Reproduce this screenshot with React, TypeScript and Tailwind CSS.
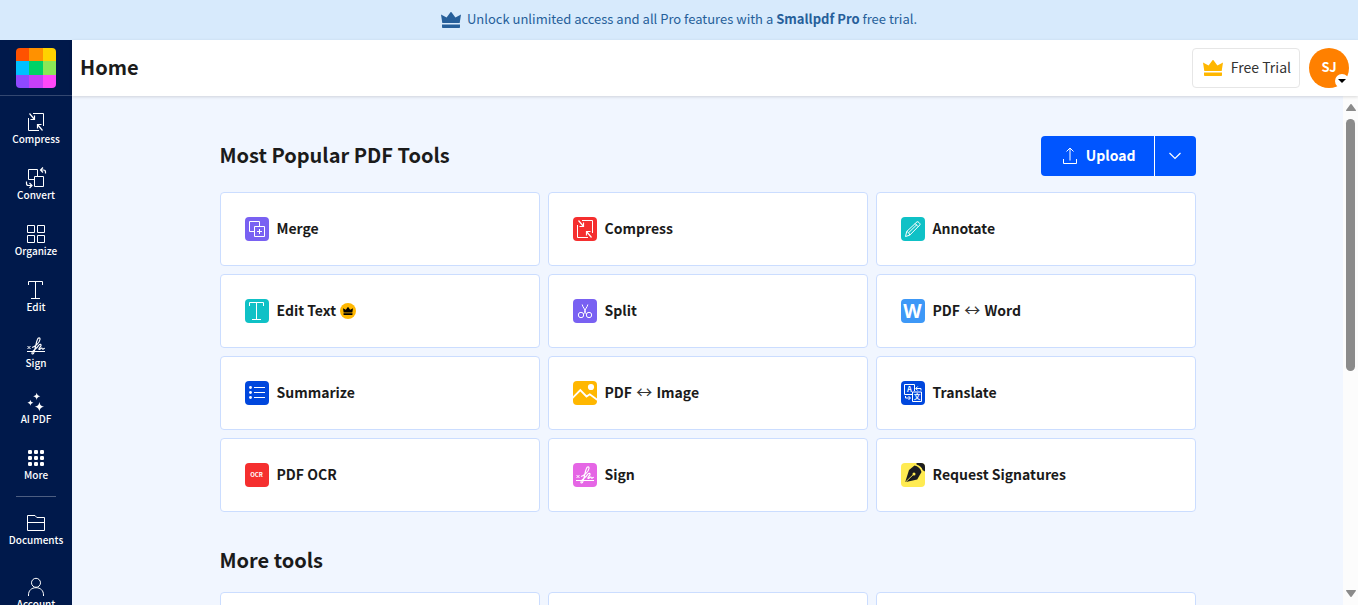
import type { ReactNode } from "react";

type IconProps = { className?: string };

function Line({ children, className = "size-6" }: { children: ReactNode; className?: string }) {
  return (
    <svg viewBox="0 0 24 24" fill="none" stroke="currentColor" strokeWidth="1" className={className} aria-hidden="true">
      {children}
    </svg>
  );
}

function Crown({ className }: IconProps) {
  return (
    <svg viewBox="0 0 20 16" fill="currentColor" className={className} aria-hidden="true">
      <path d="M0 2.4 5.6 5.6 9.3.4a.9.9 0 0 1 1.4 0l3.7 5.2L20 2.4 18.7 11H1.3z" />
      <path d="M1 12.6h18v2.6a.8.8 0 0 1-.8.8H1.8a.8.8 0 0 1-.8-.8z" />
    </svg>
  );
}

const compressPaths = (
  <>
    <path d="M9 3.500h10.500V16M15 20.500H4.500V8" />
    <path d="m5.500 3.500 5 6M10.500 5.500v4H6.500M18.500 20.500l-5-6M13.500 18.500v-4h4" strokeWidth="1.200" />
  </>
);

const signPaths = (
  <>
    <path d="M3 17.500h18" />
    <path d="m3.500 12 3 3m0-3-3 3" />
    <path
      strokeWidth="1.150"
      d="M8 13.500c2.500-.5 7.500-4.500 8-8 .2-2.500-1.800-2-2.600 0C12 8.500 11.500 15 9.700 19c-.7 1.600-2.200 1.200-1.700-.3.500-1.700 3.500-3.700 5-5.200.8-.8 1.500-2.500 2.600-3 1.500-.6 2 .8.800 2.200-1 1.200-1.900 1.700-1.500 2.500.5.900 1.700-.8 2.700-1.200.8-.3.300 1.200 1.200 1.200.7 0 .9-.7 2-1"
    />
  </>
);

const editPaths = <path d="M4.500 7V3.500h14V7M11.500 3.500v17M7 20.500h9" />;

const navTools: { label: string; icon: ReactNode }[] = [
  { label: "Compress", icon: <Line>{compressPaths}</Line> },
  {
    label: "Convert",
    icon: (
      <Line>
        <path d="M10.500 13.500h-6v-10h9v7" />
        <path d="M10.500 10.500h9v10h-9z" />
        <path d="M21.500 7.500V6c0-1.300-.7-2-2-2h-3M19 1.500 16.500 4 19 6.500M2.500 15.500V17.500c0 1.300.7 2 2 2h3.500M5.500 17 8 19.500 5.500 22" strokeWidth="1.200" />
      </Line>
    ),
  },
  {
    label: "Organize",
    icon: (
      <Line>
        <path d="M3.500 3.500h7v7h-7zM13.500 3.500h7v7h-7zM3.500 13.500h7v7h-7zM13.500 13.500h7v7h-7z" />
      </Line>
    ),
  },
  { label: "Edit", icon: <Line>{editPaths}</Line> },
  { label: "Sign", icon: <Line>{signPaths}</Line> },
  {
    label: "AI PDF",
    icon: (
      <svg viewBox="0 0 24 24" fill="currentColor" className="size-6" aria-hidden="true">
        <path d="M12.700 2.700c.6 2.400 1.200 3 3.600 3.600-2.400.6-3 1.200-3.600 3.600-.6-2.400-1.200-3-3.600-3.600 2.400-.6 3-1.200 3.600-3.600z" />
        <path d="M6.400 9.700c.5 2.100.9 2.500 3 3-2.100.5-2.500.9-3 3-.5-2.100-.9-2.500-3-3 2.100-.5 2.500-.9 3-3z" />
        <path d="M15.400 12c.8 3.300 1.400 3.900 4.700 4.700-3.300.8-3.900 1.400-4.700 4.700-.8-3.300-1.400-3.900-4.700-4.700 3.300-.8 3.900-1.400 4.700-4.700z" />
      </svg>
    ),
  },
  {
    label: "More",
    icon: (
      <svg viewBox="0 0 24 24" fill="currentColor" className="size-6" aria-hidden="true">
        {[4, 10, 16].map((y) => [4, 10, 16].map((x) => <rect key={`${x}-${y}`} x={x} y={y} width="4" height="4" rx="1.300" />))}
      </svg>
    ),
  },
];

const navAccount: { label: string; icon: ReactNode }[] = [
  {
    label: "Documents",
    icon: (
      <Line>
        <path d="M3.500 4.500h7.500l1.800 2h7.700v13h-17zM3.500 11.500h17" />
      </Line>
    ),
  },
  {
    label: "Account",
    icon: (
      <Line>
        <circle cx="12" cy="7.800" r="4.500" />
        <path d="M4.500 21v-1c0-4.500 3-7.300 7.500-7.300s7.500 2.800 7.500 7.300v1" />
      </Line>
    ),
  },
];

function NavItem({ label, icon }: { label: string; icon: ReactNode }) {
  return (
    <a href="#" className="flex h-14 shrink-0 flex-col items-center justify-center text-white">
      {icon}
      <span className="pb-0.5 text-[10px] leading-[10px] font-medium">{label}</span>
    </a>
  );
}

function Tile({ color, children }: { color: string; children: ReactNode }) {
  return (
    <span className={`flex size-6 shrink-0 items-center justify-center rounded ${color} text-white`} aria-hidden="true">
      {children}
    </span>
  );
}

const arrow = <span className="px-px text-base leading-4 font-normal text-[#333]">↔</span>;

const tools: { name: ReactNode; icon: ReactNode; pro?: boolean }[] = [
  {
    name: "Merge",
    icon: (
      <Tile color="bg-[#7961f2]">
        <Line>
          <path d="M9.500 14.500h-5v-10h10v5M9.500 9.500h10v10h-10zM14.500 12v5M12 14.500h5" />
        </Line>
      </Tile>
    ),
  },
  { name: "Compress", icon: <Tile color="bg-[#f52f2f]"><Line>{compressPaths}</Line></Tile> },
  {
    name: "Annotate",
    icon: (
      <Tile color="bg-[#0fc1c6]">
        <Line>
          <path d="m4.500 19.500 1.200-5L16 4.800c.8-.8 3.800 2 3 3L8.700 18.200zM5.700 14.500c1.500.3 2.700 1.800 3 3.700M14 6.500l3.200 3.200M7.500 15.800 16 7.500" />
        </Line>
      </Tile>
    ),
  },
  { name: "Edit Text", pro: true, icon: <Tile color="bg-[#0fc1c6]"><Line>{editPaths}</Line></Tile> },
  {
    name: "Split",
    icon: (
      <Tile color="bg-[#7961f2]">
        <Line>
          <circle cx="8" cy="16" r="2.700" />
          <circle cx="16" cy="16" r="2.700" />
          <path d="M9.200 5.500c.1 2.500 3.300 4.500 3.300 8 0 1 .7 1.500 1.500 1.700M14.800 5.500c-.1 2.500-3.300 4.500-3.300 8 0 1-.7 1.500-1.500 1.700" />
        </Line>
      </Tile>
    ),
  },
  {
    name: <>PDF {arrow} Word</>,
    icon: <Tile color="bg-[#3d98f7]"><span className="font-['Open_Sans'] text-[19px] leading-6 font-bold">W</span></Tile>,
  },
  {
    name: "Summarize",
    icon: (
      <Tile color="bg-[#0047dd]">
        <Line>
          <path d="M9 6.500h11M9 11.500h11M9 16.500h11" />
          <g fill="currentColor" stroke="none">
            <circle cx="5.500" cy="6.500" r="1.400" />
            <circle cx="5.500" cy="11.500" r="1.400" />
            <circle cx="5.500" cy="16.500" r="1.400" />
          </g>
        </Line>
      </Tile>
    ),
  },
  {
    name: <>PDF {arrow} Image</>,
    icon: (
      <Tile color="bg-[#ffb700]">
        <Line>
          <circle cx="18" cy="6" r="3.100" fill="currentColor" stroke="none" />
          <path d="M-1 17.500 7.300 9.200l6.200 6.300 3.300-2.200 8.200 6" strokeWidth="1.900" />
        </Line>
      </Tile>
    ),
  },
  {
    name: "Translate",
    icon: (
      <Tile color="bg-[#0047dd]">
        <Line>
          <path d="M11.500 13.500h-8v-10h10v6.500M11.500 11h9v9.500h-9zM20 9.500V7.500h-5M16.700 5.500l-2 2 2 2M4.500 15v2H9M7.500 15l2 2-2 2" />
          <g fill="currentColor" stroke="none" textAnchor="middle">
            <text x="8.500" y="11.200" fontSize="7.500" fontWeight="700">A</text>
            <text x="16" y="18.300" fontSize="6.500" fontWeight="700">文</text>
          </g>
        </Line>
      </Tile>
    ),
  },
  { name: "PDF OCR", icon: <Tile color="bg-[#f52f2f]"><span className="text-[6px] leading-3 font-bold">OCR</span></Tile> },
  { name: "Sign", icon: <Tile color="bg-[#e566e5]"><Line>{signPaths}</Line></Tile> },
  {
    name: "Request Signatures",
    icon: (
      <Tile color="bg-[#ffeb52]">
        <svg viewBox="0 0 24 24" className="size-6 text-[#1b1c20]" fill="currentColor">
          <path d="M15.500 0H20a4 4 0 0 1 4 4v4.500l-2.300-1.300C20.800 4.500 19 2.500 15.500 1.500z" />
          <path d="M13.500 2.500c3.500.7 6 3 7 6.500l-4.300 7.500L5 19l-.6-.6L8 7z" />
          <path d="m5 18.600 7.600-7.300" stroke="#ffeb52" strokeWidth=".9" />
          <circle cx="13" cy="10.900" r="1.500" fill="#ffeb52" />
        </svg>
      </Tile>
    ),
  },
];

function ToolCard({ icon, name, pro }: { icon?: ReactNode; name?: ReactNode; pro?: boolean }) {
  return (
    <a href="#" className="flex h-[74px] min-w-0 items-center gap-2 rounded border border-[#cbddff] bg-white px-6 text-sm leading-5 font-bold text-[#1b1b1b]">
      {icon}
      <span className="flex min-w-0 items-center gap-1">
        <span className="pb-0.5">{name}</span>
        {pro && (
          <span className="flex size-4 items-center justify-center rounded-full bg-[#ffb700] text-black">
            <Crown className="h-2 w-2.5" />
          </span>
        )}
      </span>
    </a>
  );
}

function Sidebar() {
  const logo = ["#ff5200", "#ff9100", "#ffd200", "#00c0ff", "#00d267", "#8ae856", "#8f49ff", "#c640f8", "#ff48f8"];
  return (
    <aside className="flex w-[72px] shrink-0 flex-col overflow-hidden bg-[#00194b]">
      <a href="#" aria-label="Smallpdf" className="flex h-14 shrink-0 items-center justify-center border-b border-[#334770] pt-px">
        <svg viewBox="0 0 40 40" className="size-10 rounded" shapeRendering="crispEdges" aria-hidden="true">
          {logo.map((fill, i) => {
            const at = [0, 13, 27];
            return <rect key={fill} x={at[i % 3]} y={at[Math.floor(i / 3)]} width="14" height="14" fill={fill} />;
          })}
        </svg>
      </a>
      <nav aria-label="Tools" className="flex flex-col pt-1">
        {navTools.map((item) => <NavItem key={item.label} {...item} />)}
        <hr className="mx-4 my-1 border-[#4d5e81]" />
        <div className="flex flex-col gap-2">
          {navAccount.map((item) => <NavItem key={item.label} {...item} />)}
        </div>
      </nav>
    </aside>
  );
}

function Header() {
  return (
    <header className="z-10 flex h-14 shrink-0 items-center justify-between bg-white pr-[9px] pl-2 shadow-[0_1px_3px_rgba(0,0,0,0.15)]">
      <h1 className="pb-0.5 text-xl leading-8 font-bold text-[#1b1b1b]">Home</h1>
      <div className="flex items-center gap-[9px]">
        <button type="button" className="flex h-10 items-center gap-2 rounded border border-[#e6e6e6] pr-2 pl-2.5 text-sm leading-5 text-[#333]">
          <Crown className="h-4 w-5 text-[#ffb700]" />
          <span className="pb-0.5">Free Trial</span>
        </button>
        <button type="button" aria-label="Account menu" className="relative size-10 rounded-full bg-[#ff8000] pb-0.5 text-[13px] leading-5 font-bold text-white">
          SJ
          <span className="absolute right-0 bottom-0 flex size-3.5 items-center justify-center rounded-full bg-white text-black">
            <svg viewBox="0 0 8 4" className="h-1 w-2" fill="currentColor" aria-hidden="true">
              <path d="M0 0h8L4 4z" />
            </svg>
          </span>
        </button>
      </div>
    </header>
  );
}

function ScrollRail() {
  return (
    <div className="flex w-[15px] shrink-0 flex-col items-center bg-[#fcfcfc] py-2 text-[#8b8b8b]" aria-hidden="true">
      <svg viewBox="0 0 10 7" className="mb-2 h-[7px] w-2.5" fill="currentColor">
        <path d="M4.200.5a1 1 0 0 1 1.600 0L9.800 6a.6.6 0 0 1-.5 1H.7a.6.6 0 0 1-.5-1z" />
      </svg>
      <div className="w-[9px] grow-[535] rounded-full bg-[#8b8b8b]" />
      <div className="grow-[465]" />
      <svg viewBox="0 0 10 7" className="h-[7px] w-2.5" fill="currentColor">
        <path d="M4.200 6.500a1 1 0 0 0 1.600 0L9.800 1a.6.6 0 0 0-.5-1H.7a.6.6 0 0 0-.5 1z" />
      </svg>
    </div>
  );
}

export default function App() {
  return (
    <div className="flex h-screen flex-col overflow-hidden bg-[#f1f6ff] font-['Noto_Sans_CJK_SC',sans-serif]">
      <div className="flex h-10 shrink-0 items-center justify-center gap-1.5 bg-[#d7eafc] text-[13px] leading-5 text-[#265f9a]">
        <Crown className="h-4 w-5" />
        <p className="pb-0.5">
          Unlock unlimited access and all Pro features with a <strong>Smallpdf Pro</strong> free trial.
        </p>
      </div>
      <div className="flex min-h-0 flex-1">
        <Sidebar />
        <div className="flex min-w-0 flex-1 flex-col">
          <Header />
          <div className="flex min-h-0 flex-1">
            <main className="min-w-0 flex-1 overflow-y-auto px-6 pt-10 [scrollbar-width:none]">
              <div className="mx-auto max-w-[976px]">
                <section>
                  <div className="mb-4 flex h-10 items-center justify-between">
                    <h2 className="pb-0.5 text-xl leading-8 font-bold text-[#1b1b1b]">Most Popular PDF Tools</h2>
                    <div className="flex h-10 gap-px overflow-hidden rounded bg-white text-white">
                      <button type="button" className="flex items-center gap-1 bg-[#0055ff] pr-[18px] pl-[17px] text-sm leading-5 font-bold">
                        <Line>
                          <path d="M5.500 15v4.500h13V15M12 16.500V4M8.500 7.500 12 4l3.500 3.500" />
                        </Line>
                        <span className="pb-0.5">Upload</span>
                      </button>
                      <button type="button" aria-label="More upload options" className="flex w-[41px] items-center justify-center bg-[#0055ff]">
                        <svg viewBox="0 0 12 8" className="h-2 w-3" fill="none" stroke="currentColor" strokeWidth="1.200" aria-hidden="true">
                          <path d="m.5 1 5.500 5.500L11.500 1" />
                        </svg>
                      </button>
                    </div>
                  </div>
                  <div className="grid grid-cols-3 gap-2">
                    {tools.map((tool, i) => <ToolCard key={i} {...tool} />)}
                  </div>
                </section>
                <section className="pt-8">
                  <h2 className="mb-3.5 pb-0.5 text-xl leading-8 font-bold text-[#1b1b1b]">More tools</h2>
                  <div className="grid grid-cols-3 gap-2">
                    <ToolCard />
                    <ToolCard />
                    <ToolCard />
                  </div>
                </section>
              </div>
            </main>
            <ScrollRail />
          </div>
        </div>
      </div>
    </div>
  );
}
